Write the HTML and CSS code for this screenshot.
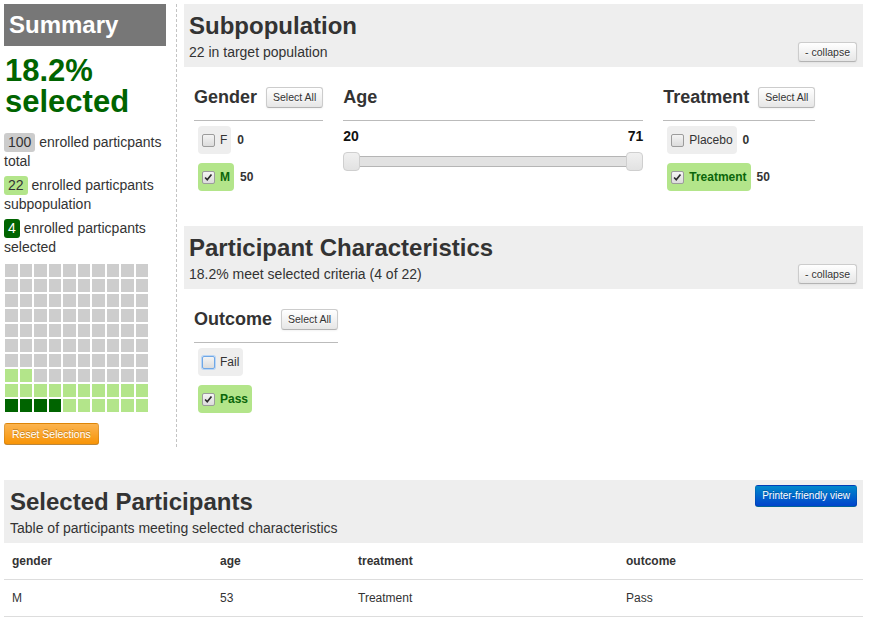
FILE: index.html
```html
<!DOCTYPE html>
<html>
<head>
<meta charset="utf-8">
<title>Summary</title>
<link rel="stylesheet" href="styles.css">
</head>
<body>
<div class="top">
  <aside class="sidebar">
    <div class="summary-head">Summary</div>
    <div class="pct">18.2%<br>selected</div>
    <div class="stats">
      <p class="stat"><span class="badge b-gray">100</span><span class="lead"> enrolled particpants</span><br><span>total</span></p>
      <p class="stat"><span class="badge b-light">22</span><span class="lead"> enrolled particpants</span><br><span>subpopulation</span></p>
      <p class="stat"><span class="badge b-dark">4</span><span class="lead"> enrolled particpants</span><br><span>selected</span></p>
    </div>
    <div class="grid">
      <i class="g"></i><i class="g"></i><i class="g"></i><i class="g"></i><i class="g"></i><i class="g"></i><i class="g"></i><i class="g"></i><i class="g"></i><i class="g"></i>
      <i class="g"></i><i class="g"></i><i class="g"></i><i class="g"></i><i class="g"></i><i class="g"></i><i class="g"></i><i class="g"></i><i class="g"></i><i class="g"></i>
      <i class="g"></i><i class="g"></i><i class="g"></i><i class="g"></i><i class="g"></i><i class="g"></i><i class="g"></i><i class="g"></i><i class="g"></i><i class="g"></i>
      <i class="g"></i><i class="g"></i><i class="g"></i><i class="g"></i><i class="g"></i><i class="g"></i><i class="g"></i><i class="g"></i><i class="g"></i><i class="g"></i>
      <i class="g"></i><i class="g"></i><i class="g"></i><i class="g"></i><i class="g"></i><i class="g"></i><i class="g"></i><i class="g"></i><i class="g"></i><i class="g"></i>
      <i class="g"></i><i class="g"></i><i class="g"></i><i class="g"></i><i class="g"></i><i class="g"></i><i class="g"></i><i class="g"></i><i class="g"></i><i class="g"></i>
      <i class="g"></i><i class="g"></i><i class="g"></i><i class="g"></i><i class="g"></i><i class="g"></i><i class="g"></i><i class="g"></i><i class="g"></i><i class="g"></i>
      <i class="l"></i><i class="l"></i><i class="g"></i><i class="g"></i><i class="g"></i><i class="g"></i><i class="g"></i><i class="g"></i><i class="g"></i><i class="g"></i>
      <i class="l"></i><i class="l"></i><i class="l"></i><i class="l"></i><i class="l"></i><i class="l"></i><i class="l"></i><i class="l"></i><i class="l"></i><i class="l"></i>
      <i class="d"></i><i class="d"></i><i class="d"></i><i class="d"></i><i class="l"></i><i class="l"></i><i class="l"></i><i class="l"></i><i class="l"></i><i class="l"></i>
    </div>
    <button class="btn btn-warning">Reset Selections</button>
  </aside>

  <main class="main">
    <div class="panel-head">
      <div>
        <h2>Subpopulation</h2>
        <p>22 in target population</p>
      </div>
      <button class="btn btn-mini">- collapse</button>
    </div>
    <div class="filters">
      <div class="fcol">
        <div class="fhead"><h3>Gender</h3><button class="btn btn-mini">Select All</button></div>
        <div class="items">
          <div class="item"><span class="chk-label"><span class="box"></span>F</span><span class="count">0</span></div>
          <div class="item"><span class="chk-label on"><span class="box"><svg viewBox="0 0 13 13" width="11" height="11"><path d="M2.5 6.5 L5 9.2 L10 3" fill="none" stroke="#2b2b2b" stroke-width="2"/></svg></span>M</span><span class="count">50</span></div>
        </div>
      </div>
      <div class="fcol age">
        <div class="fhead"><h3>Age</h3></div>
        <div class="age-vals"><span>20</span><span>71</span></div>
        <div class="slider"><span class="handle h-left"></span><span class="handle h-right"></span></div>
      </div>
      <div class="fcol">
        <div class="fhead"><h3>Treatment</h3><button class="btn btn-mini">Select All</button></div>
        <div class="items">
          <div class="item"><span class="chk-label"><span class="box"></span>Placebo</span><span class="count">0</span></div>
          <div class="item"><span class="chk-label on"><span class="box"><svg viewBox="0 0 13 13" width="11" height="11"><path d="M2.5 6.5 L5 9.2 L10 3" fill="none" stroke="#2b2b2b" stroke-width="2"/></svg></span>Treatment</span><span class="count">50</span></div>
        </div>
      </div>
    </div>

    <div class="panel-head panel-gap">
      <div>
        <h2>Participant Characteristics</h2>
        <p>18.2% meet selected criteria (4 of 22)</p>
      </div>
      <button class="btn btn-mini">- collapse</button>
    </div>
    <div class="filters">
      <div class="fcol">
        <div class="fhead"><h3>Outcome</h3><button class="btn btn-mini">Select All</button></div>
        <div class="items">
          <div class="item"><span class="chk-label"><span class="box focus"></span>Fail</span></div>
          <div class="item"><span class="chk-label on"><span class="box"><svg viewBox="0 0 13 13" width="11" height="11"><path d="M2.5 6.5 L5 9.2 L10 3" fill="none" stroke="#2b2b2b" stroke-width="2"/></svg></span>Pass</span></div>
        </div>
      </div>
    </div>
  </main>
</div>

<section class="selected">
  <div class="panel-head sel-head">
    <div>
      <h2>Selected Participants</h2>
      <p>Table of participants meeting selected characteristics</p>
    </div>
    <button class="btn btn-primary">Printer-friendly view</button>
  </div>
  <table class="ptable">
    <thead>
      <tr><th class="c1">gender</th><th class="c2">age</th><th class="c3">treatment</th><th class="c4">outcome</th></tr>
    </thead>
    <tbody>
      <tr><td>M</td><td>53</td><td>Treatment</td><td>Pass</td></tr>
    </tbody>
  </table>
</section>
</body>
</html>
```

FILE: styles.css
```css
* { box-sizing: border-box; }

body {
  margin: 0;
  padding: 4px 6px 0 4px;
  font-family: "Liberation Sans", Arial, sans-serif;
  font-size: 14px;
  line-height: 20px;
  color: #333;
  background: #fff;
}

.top {
  display: flex;
  align-items: stretch;
}

/* ---------- sidebar ---------- */
.sidebar {
  flex: none;
  width: 173px;
  padding: 0 10px 2px 0;
  border-right: 1px dashed #c4c4c4;
  display: flex;
  flex-direction: column;
  align-items: flex-start;
}

.summary-head {
  align-self: stretch;
  background: #777;
  color: #fff;
  font-weight: bold;
  font-size: 24px;
  height: 42px;
  line-height: 42px;
  padding-left: 5px;
}

.pct {
  margin-top: 9px;
  font-size: 31px;
  line-height: 31px;
  font-weight: bold;
  color: #006400;
  padding-left: 1px;
}

.stats {
  margin-top: 16px;
  display: flex;
  flex-direction: column;
  gap: 5px;
}

.stat {
  margin: 0;
  line-height: 19px;
}

.badge {
  display: inline-block;
  padding: 0 4px;
  line-height: 19px;
  border-radius: 3px;
}
.b-gray { background: #ccc; }
.b-light { background: #b3e58a; }
.b-dark { background: #006400; color: #fff; }

.grid {
  margin: 7px 0 0 1px;
  display: grid;
  grid-template-columns: repeat(10, 12.5px);
  grid-auto-rows: 13px;
  gap: 2px;
}
.grid i { display: block; }
.grid .g { background: #cdcdcd; }
.grid .l { background: #b3e58a; }
.grid .d { background: #006400; }

/* ---------- buttons ---------- */
.btn {
  font-family: "Liberation Sans", Arial, sans-serif;
  display: inline-block;
  border-radius: 3px;
  cursor: pointer;
  margin: 0;
}

.btn-mini {
  font-size: 10.5px;
  line-height: 18px;
  padding: 0 6px;
  color: #333;
  text-shadow: 0 1px 1px rgba(255,255,255,.75);
  background: linear-gradient(#ffffff, #e6e6e6);
  border: 1px solid #ccc;
  border-bottom-color: #b3b3b3;
  box-shadow: inset 0 1px 0 rgba(255,255,255,.2), 0 1px 2px rgba(0,0,0,.05);
}

.fhead .btn-mini { line-height: 19px; }

.btn-warning {
  margin-top: 11px;
  font-size: 10.5px;
  line-height: 20px;
  padding: 0 7px;
  color: #fff;
  text-shadow: 0 -1px 0 rgba(0,0,0,.25);
  background: linear-gradient(#fbb450, #f89406);
  border: 1px solid rgba(0,0,0,.1);
  border-bottom-color: rgba(0,0,0,.25);
}

.btn-primary {
  font-size: 10px;
  line-height: 20px;
  padding: 0 6px;
  color: #fff;
  text-shadow: 0 -1px 0 rgba(0,0,0,.25);
  background: linear-gradient(#0088cc, #0044cc);
  border: 1px solid rgba(0,0,0,.1);
  border-bottom-color: rgba(0,0,0,.25);
}

/* ---------- main ---------- */
.main {
  flex: 1;
  min-width: 0;
  margin-left: 7px;
}

.panel-head {
  background: #eee;
  padding: 8px 6px 5px 5px;
  display: flex;
  justify-content: space-between;
  align-items: flex-end;
}

.panel-head h2 {
  margin: 0;
  font-size: 24px;
  line-height: 28px;
  font-weight: bold;
}

.panel-head p {
  margin: 2px 0 0;
  font-size: 14px;
  line-height: 20px;
}

.panel-gap { margin-top: 35px; }

.filters {
  display: flex;
  gap: 20px;
  padding: 20px 10px 0;
}

.fcol { flex: none; }
.fcol.age { width: 300px; }

.fhead {
  display: flex;
  align-items: center;
  gap: 9px;
  padding-bottom: 12px;
  border-bottom: 1px solid #bbb;
}

.fhead h3 {
  margin: 0;
  font-size: 18px;
  line-height: 21px;
  font-weight: bold;
}

.items {
  padding: 5px 0 0 4px;
  display: flex;
  flex-direction: column;
  align-items: flex-start;
  gap: 9px;
}

.item {
  display: flex;
  align-items: center;
}

.chk-label {
  display: inline-flex;
  align-items: center;
  height: 28px;
  padding: 0 4px;
  border-radius: 4px;
  background: #eee;
  font-size: 12px;
  color: #333;
}

.chk-label.on {
  background: #b3e58a;
  color: #0b660b;
  font-weight: bold;
}

.box {
  width: 13px;
  height: 13px;
  margin-right: 5px;
  border: 1px solid #9c9c9c;
  border-radius: 2px;
  background: linear-gradient(#f4f4f4, #dcdcdc);
  display: inline-flex;
  align-items: center;
  justify-content: center;
}

.box.focus {
  border-color: #6fa7e6;
  box-shadow: 0 0 0 1px #b9d5f5;
}

.count {
  margin-left: 6px;
  font-size: 12px;
  font-weight: bold;
}

.age-vals {
  padding-top: 5px;
  display: flex;
  justify-content: space-between;
  font-weight: bold;
  font-size: 14px;
  line-height: 20px;
  color: #111;
}

.slider {
  position: relative;
  margin-top: 10px;
  height: 11px;
  border: 1px solid #b5b5b5;
  background: #e2e2e2;
  border-radius: 2px;
}

.handle {
  position: absolute;
  top: -5px;
  width: 17px;
  height: 19px;
  border: 1px solid #cfcfcf;
  border-radius: 4px;
  background: linear-gradient(#f0f0f0, #e2e2e2);
}
.h-left { left: -1px; }
.h-right { right: -1px; }

/* ---------- selected participants ---------- */
.selected { margin-top: 33px; }

.sel-head {
  align-items: flex-start;
  padding-left: 6px;
}
.sel-head .btn-primary { margin-top: -3px; }

.ptable {
  width: 100%;
  table-layout: fixed;
  border-collapse: collapse;
  font-size: 12px;
  line-height: 20px;
}

.ptable th,
.ptable td {
  text-align: left;
  padding: 8px;
  border-bottom: 1px solid #ddd;
}

.ptable th { font-weight: bold; }

.c1 { width: 208px; }
.c2 { width: 138px; }
.c3 { width: 268px; }
```
